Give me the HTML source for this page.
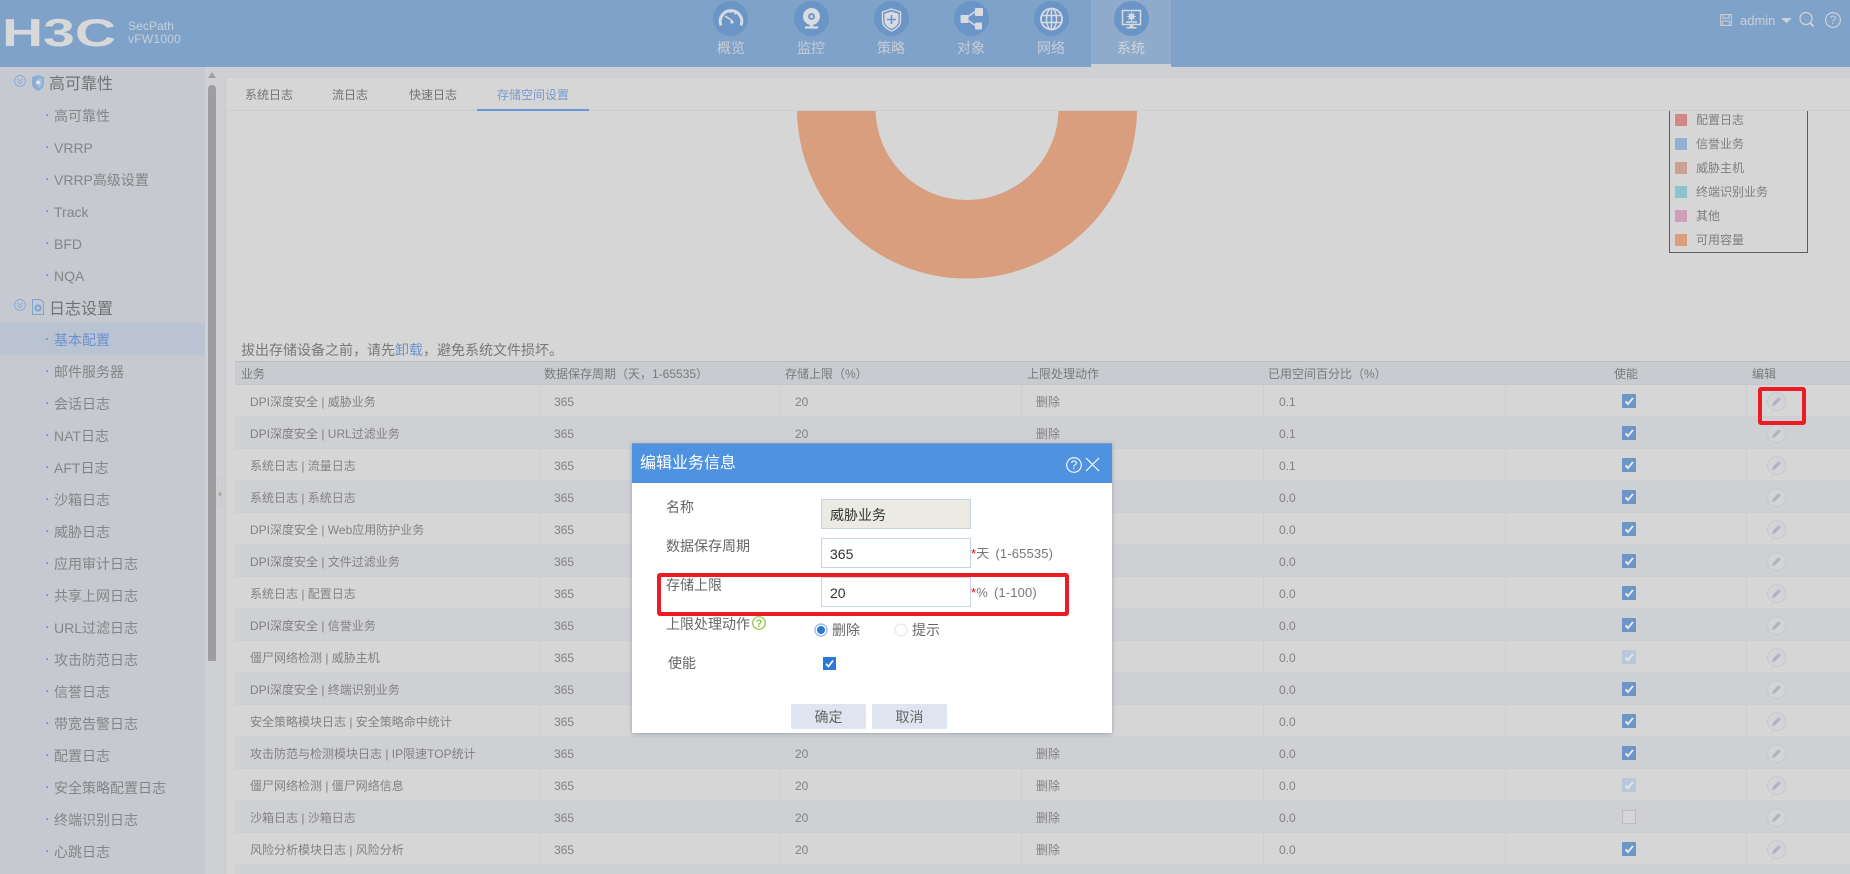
<!DOCTYPE html>
<html lang="zh-CN"><head><meta charset="utf-8"><title>H3C SecPath vFW1000</title>
<style>
*{box-sizing:border-box}
html,body{margin:0;padding:0;width:1850px;height:874px;overflow:hidden;background:#cfd0d4;font-family:"Liberation Sans","Noto Sans CJK SC",sans-serif;color:#888}
#wrap{position:relative;width:1850px;height:874px;overflow:hidden}
.a{position:absolute;white-space:nowrap}
svg{position:absolute;display:block;overflow:visible}
#hd{left:0;top:0;width:1850px;height:67px;background:#7fa2c9}
.nc{position:absolute;top:1px;width:35px;height:35px;border-radius:50%;background:#6a95c6}
.nt{position:absolute;top:38px;width:80px;text-align:center;font-size:14px;line-height:20px;color:#c6cdd7}
.s{position:absolute;left:54px;font-size:14px;line-height:20px;color:#858585}
.s:before{content:"";position:absolute;left:-8px;top:8px;width:2px;height:2px;background:#7e9dc6}
.sec{position:absolute;left:49px;font-size:16px;line-height:22px;color:#727272}
.r{position:absolute;left:235px;width:1615px;height:32px;line-height:35px;font-size:12px;color:#828282;border-bottom:1px solid #cdced1}
.r.l{background:#d6d6d6}.r.d{background:#cfd0d4}
.r i{position:absolute;top:0;width:1px;height:32px;background:#cdced1}
.r span{position:absolute;top:0;white-space:nowrap}
.c{position:absolute;left:1387px;top:9px;width:14px;height:14px;background:#6d96c8}
.c svg{left:0;top:0}
.c.dis{background:#b9c8d9}
.c.off{background:#d6d6d6;border:1px solid #bcbdc0}
.e{position:absolute;left:1532px;top:7px;width:19px;height:19px;border-radius:50%;border:1px solid #c6c8cd;background:#d3d4d7}
.e svg{left:3px;top:3px}
.th{position:absolute;top:0;line-height:24px;font-size:12px;color:#7a7a7a;white-space:nowrap}
.lg{position:absolute;left:1675px;width:12px;height:12px}
.lt{position:absolute;left:1696px;font-size:12px;line-height:16px;color:#7e7e7e}
.lb{position:absolute;font-size:14px;line-height:20px;color:#666;white-space:nowrap}
.in{position:absolute;left:821px;width:150px;height:30px;border:1px solid #c6d3e6;background:#fff;font-size:14px;line-height:30px;padding-left:8px;color:#333}
.hint{position:absolute;left:971px;font-size:13px;line-height:18px;color:#777;white-space:nowrap;letter-spacing:.15px}
.hint b{color:#e00;font-weight:400}
.btn{position:absolute;top:704px;width:75px;height:25px;background:#dfe5f0;border-radius:2px;text-align:center;font-size:14px;line-height:26px;color:#666}
.red{position:absolute;border:4px solid #ed1c24;border-radius:3px}
</style></head><body>
<svg width="0" height="0" style="position:absolute"><defs>
<symbol id="ck" viewBox="0 0 14 14"><path d="M3.500 7.500l2.500 2.500 5-6" fill="none" stroke="#e4e6e9" stroke-width="2"/></symbol>
<symbol id="pn" viewBox="0 0 11 11"><path d="M1 10l.8-3L7.500 1.300 9.700 3.500 4 9.200z" fill="#b0b3bc"/></symbol>
</defs></svg>
<div id="wrap">

<!-- header -->
<div class="a" id="hd"></div>
<svg style="left:0;top:0" width="130" height="60"><text x="2" y="46" font-family="Liberation Sans" font-weight="700" font-size="39" fill="#d8d8d8" textLength="114" lengthAdjust="spacingAndGlyphs">H3C</text></svg>
<div class="a" style="left:128px;top:19px;font-size:12px;line-height:14px;color:#c8cfd8;letter-spacing:.1px">SecPath</div>
<div class="a" style="left:128px;top:32px;font-size:12px;line-height:14px;color:#c8cfd8;letter-spacing:.25px">vFW1000</div>

<div class="a" style="left:1091px;top:0;width:80px;height:64px;background:#8eabcb"></div>
<div class="a" style="left:1091px;top:64px;width:80px;height:3px;background:#cfd0d4"></div>

<div class="nc" style="left:713px"><svg width="35" height="35" viewBox="0 0 35 35" fill="none" stroke="#d8dbe0"><path d="M8 24.500a10.800 10.800 0 1 1 20 0" stroke-width="3"/><path d="M12 15l7 4.500M17.500 10v2M23 12l-1.500 1.500" stroke-width="1.400"/><circle cx="19" cy="21" r="1.600" fill="#d8dbe0" stroke="none"/></svg></div>
<div class="nt" style="left:691px">概览</div>
<div class="nc" style="left:794px"><svg width="35" height="35" viewBox="0 0 35 35" fill="none"><circle cx="17.500" cy="15.500" r="8.500" fill="#d8dbe0"/><circle cx="17.500" cy="15.500" r="3.400" fill="#6a95c6"/><circle cx="17.500" cy="15.500" r="1.500" fill="#d8dbe0"/><path d="M16 23h3v3h-3z" fill="#d8dbe0"/><path d="M11 26.500h13" stroke="#d8dbe0" stroke-width="2.200"/></svg></div>
<div class="nt" style="left:771px">监控</div>
<div class="nc" style="left:874px"><svg width="35" height="35" viewBox="0 0 35 35" fill="none" stroke="#d8dbe0"><path d="M17.500 8l9 3v9c0 5-4.500 8-9 10-4.500-2-9-5-9-10v-9z" stroke-width="1.400"/><path d="M17.500 10.500l7 2.300v7.200c0 3.800-3.500 6.300-7 7.900-3.500-1.600-7-4.100-7-7.900v-7.200z" fill="#d8dbe0" stroke="none"/><path d="M17.500 14v9M13 18.500h9" stroke="#6a95c6" stroke-width="1.600"/></svg></div>
<div class="nt" style="left:851px">策略</div>
<div class="nc" style="left:954px"><svg width="35" height="35" viewBox="0 0 35 35"><path d="M12 17l10-7M12 18l10 7" stroke="#d8dbe0" stroke-width="1.500"/><rect x="6.500" y="14" width="8" height="8" rx="1" fill="#d8dbe0"/><rect x="21" y="7" width="8" height="8" rx="1" fill="#d8dbe0"/><rect x="21" y="21.500" width="7" height="7" rx="1" fill="#d8dbe0"/></svg></div>
<div class="nt" style="left:931px">对象</div>
<div class="nc" style="left:1034px"><svg width="35" height="35" viewBox="0 0 35 35" fill="none" stroke="#d8dbe0" stroke-width="1.500"><circle cx="17.500" cy="18" r="10.500" stroke-width="1.800"/><ellipse cx="17.500" cy="18" rx="5" ry="10.500"/><path d="M17.500 7.500v21M7.500 14.500h20M7.500 21.500h20"/></svg></div>
<div class="nt" style="left:1011px">网络</div>
<div class="nc" style="left:1114px"><svg width="35" height="35" viewBox="0 0 35 35" fill="none"><rect x="8.500" y="9.500" width="18" height="14" stroke="#d8dbe0" stroke-width="1.500"/><circle cx="17.500" cy="15.500" r="3" fill="#d8dbe0"/><circle cx="17.500" cy="15.500" r="1" fill="#6a95c6"/><path d="M17.500 11.200v8.600M13.200 15.500h8.600M14.500 12.500l6 6M20.500 12.500l-6 6" stroke="#d8dbe0" stroke-width="1"/><path d="M12 21h11M16.500 24h2v2h-2zM12.500 26.800h10" stroke="#d8dbe0" stroke-width="1.500"/></svg></div>
<div class="nt" style="left:1091px;color:#d0d4d9">系统</div>

<svg style="left:1720px;top:14px" width="12" height="12" viewBox="0 0 12 12" fill="none" stroke="#c6cdd7" stroke-width="1.100"><path d="M.6.600h10.800v10.800H.6z"/><path d="M3 .6v3.600h6V.6M2.500 11.400V7h7v4.400"/></svg>
<div class="a" style="left:1740px;top:13px;font-size:13px;line-height:16px;color:#ccd1d8">admin</div>
<svg style="left:1781px;top:18px" width="11" height="5"><path d="M0 0h11L5.500 5z" fill="#ccd1d8"/></svg>
<svg style="left:1799px;top:12px" width="16" height="16" fill="none" stroke="#ccd1d8"><circle cx="7" cy="6.500" r="6" stroke-width="1.300"/><path d="M11.500 11l3 3.500" stroke-width="2"/></svg>
<svg style="left:1825px;top:12px" width="16" height="16" fill="none" stroke="#ccd1d8"><circle cx="8" cy="8" r="7.400" stroke-width="1.200"/><text x="8" y="12.200" text-anchor="middle" font-size="12" fill="#ccd1d8" stroke="none" font-family="Liberation Sans">?</text></svg>

<!-- sidebar -->
<div class="a" style="left:0;top:67px;width:205px;height:807px;background:#c6c9cf"></div>
<div class="a" style="left:205px;top:67px;width:20px;height:807px;background:#cfd0d4"></div>
<svg style="left:208px;top:72px" width="8" height="6"><path d="M4 0l4 6H0z" fill="#9e9e9e"/></svg>
<div class="a" style="left:208px;top:85px;width:8px;height:576px;background:#9e9e9e;border-radius:4px 4px 0 0"></div>
<div class="a" style="left:217px;top:477px;width:5px;height:30px;border:1px solid #c9cbcf"></div>
<svg style="left:218px;top:491px" width="3" height="6"><path d="M3 0v6L0 3z" fill="#a6a6a6"/></svg>

<svg style="left:14px;top:75px" width="12" height="12" fill="none" stroke="#8cacd4"><circle cx="6" cy="6" r="5.500"/><path d="M3.500 3.800L6 6l2.500-2.200M3.500 6.500L6 8.700l2.500-2.200"/></svg>
<svg style="left:32px;top:75px" width="12" height="16" viewBox="0 0 12 16"><path d="M6 0l6 2v7c0 3.500-3 5.500-6 7-3-1.500-6-3.500-6-7V2z" fill="#8cacd4"/><path d="M6 2.500l4 1.300v5c0 2.500-2 4-4 5z" fill="#a6bfdc"/><circle cx="6" cy="7.500" r="2" fill="#e2e7ee"/></svg>
<div class="sec" style="top:74px">高可靠性</div>
<div class="s" style="top:106px">高可靠性</div>
<div class="s" style="top:138px">VRRP</div>
<div class="s" style="top:170px">VRRP高级设置</div>
<div class="s" style="top:202px">Track</div>
<div class="s" style="top:234px">BFD</div>
<div class="s" style="top:266px">NQA</div>

<svg style="left:14px;top:299px" width="12" height="12" fill="none" stroke="#8cacd4"><circle cx="6" cy="6" r="5.500"/><path d="M3.500 3.800L6 6l2.500-2.200M3.500 6.500L6 8.700l2.500-2.200"/></svg>
<svg style="left:32px;top:299px" width="12" height="16" viewBox="0 0 12 16" fill="none" stroke="#7ca2d0"><path d="M.5.500h8l3 3v12H.500z"/><circle cx="6" cy="9" r="2.600" stroke-width="2"/></svg>
<div class="sec" style="top:299px">日志设置</div>
<div class="a" style="left:0;top:323px;width:205px;height:32px;background:#b9c3d1"></div>
<div class="s" style="top:330px;color:#6f92ce">基本配置</div>
<div class="s" style="top:362px">邮件服务器</div>
<div class="s" style="top:394px">会话日志</div>
<div class="s" style="top:426px">NAT日志</div>
<div class="s" style="top:458px">AFT日志</div>
<div class="s" style="top:490px">沙箱日志</div>
<div class="s" style="top:522px">威胁日志</div>
<div class="s" style="top:554px">应用审计日志</div>
<div class="s" style="top:586px">共享上网日志</div>
<div class="s" style="top:618px">URL过滤日志</div>
<div class="s" style="top:650px">攻击防范日志</div>
<div class="s" style="top:682px">信誉日志</div>
<div class="s" style="top:714px">带宽告警日志</div>
<div class="s" style="top:746px">配置日志</div>
<div class="s" style="top:778px">安全策略配置日志</div>
<div class="s" style="top:810px">终端识别日志</div>
<div class="s" style="top:842px">心跳日志</div>

<!-- content panel -->
<div class="a" style="left:225px;top:77px;width:1625px;height:797px;background:#d6d6d6;border-left:1px solid #c6c7ca;border-top:1px solid #cccdd0"></div>
<div class="a" style="left:225px;top:110px;width:1625px;height:1px;background:#cdced1"></div>
<div class="a" style="left:245px;top:85px;font-size:12px;line-height:20px;color:#737373">系统日志</div>
<div class="a" style="left:332px;top:85px;font-size:12px;line-height:20px;color:#737373">流日志</div>
<div class="a" style="left:409px;top:85px;font-size:12px;line-height:20px;color:#737373">快速日志</div>
<div class="a" style="left:497px;top:85px;font-size:12px;line-height:20px;color:#769bcd">存储空间设置</div>
<div class="a" style="left:477px;top:109px;width:112px;height:2px;background:#6696d4"></div>

<!-- donut -->
<div class="a" style="left:700px;top:111px;width:600px;height:200px;overflow:hidden">
<svg style="left:0;top:0" width="600" height="200"><circle cx="267" cy="-2.500" r="130.750" fill="none" stroke="#d99e7e" stroke-width="78.500"/></svg></div>

<!-- legend -->
<div class="a" style="left:1669px;top:111px;width:139px;height:142px;border:1px solid #5c5c5c;border-top:0"></div>
<div class="lg" style="top:114px;background:#d18987"></div><div class="lt" style="top:112px">配置日志</div>
<div class="lg" style="top:138px;background:#90b1d2"></div><div class="lt" style="top:136px">信誉业务</div>
<div class="lg" style="top:162px;background:#cda192"></div><div class="lt" style="top:160px">威胁主机</div>
<div class="lg" style="top:186px;background:#8dc4cb"></div><div class="lt" style="top:184px">终端识别业务</div>
<div class="lg" style="top:210px;background:#d09eb9"></div><div class="lt" style="top:208px">其他</div>
<div class="lg" style="top:234px;background:#dc9f7e"></div><div class="lt" style="top:232px">可用容量</div>

<div class="a" style="left:241px;top:340px;font-size:14px;line-height:20px;color:#787878">拔出存储设备之前，请先<span style="color:#6b93cc">卸载</span>，避免系统文件损坏。</div>

<!-- table head -->
<div class="a" style="left:235px;top:361px;width:1615px;height:24px;background:#c8cbcf;border-top:1px solid #bcbdc0;border-bottom:1px solid #c2c6cf">
<span class="th" style="left:6px">业务</span><span class="th" style="left:309px">数据保存周期（天，1-65535）</span><span class="th" style="left:550px">存储上限（%）</span><span class="th" style="left:792px">上限处理动作</span><span class="th" style="left:1033px">已用空间百分比（%）</span><span class="th" style="left:1379px">使能</span><span class="th" style="left:1517px">编辑</span></div>

<!-- rows -->
<div class="r l" style="top:385px"><i style="left:304px"></i><i style="left:544px"></i><i style="left:786px"></i><i style="left:1028px"></i><i style="left:1270px"></i><i style="left:1511px"></i><span style="left:15px">DPI深度安全 | 威胁业务</span><span style="left:319px">365</span><span style="left:560px">20</span><span style="left:801px">删除</span><span style="left:1044px">0.1</span><div class="c"><svg width="14" height="14"><use href="#ck"/></svg></div><div class="e"><svg width="11" height="11"><use href="#pn"/></svg></div></div>
<div class="r d" style="top:417px"><i style="left:304px"></i><i style="left:544px"></i><i style="left:786px"></i><i style="left:1028px"></i><i style="left:1270px"></i><i style="left:1511px"></i><span style="left:15px">DPI深度安全 | URL过滤业务</span><span style="left:319px">365</span><span style="left:560px">20</span><span style="left:801px">删除</span><span style="left:1044px">0.1</span><div class="c"><svg width="14" height="14"><use href="#ck"/></svg></div><div class="e"><svg width="11" height="11"><use href="#pn"/></svg></div></div>
<div class="r l" style="top:449px"><i style="left:304px"></i><i style="left:544px"></i><i style="left:786px"></i><i style="left:1028px"></i><i style="left:1270px"></i><i style="left:1511px"></i><span style="left:15px">系统日志 | 流量日志</span><span style="left:319px">365</span><span style="left:560px">20</span><span style="left:801px">删除</span><span style="left:1044px">0.1</span><div class="c"><svg width="14" height="14"><use href="#ck"/></svg></div><div class="e"><svg width="11" height="11"><use href="#pn"/></svg></div></div>
<div class="r d" style="top:481px"><i style="left:304px"></i><i style="left:544px"></i><i style="left:786px"></i><i style="left:1028px"></i><i style="left:1270px"></i><i style="left:1511px"></i><span style="left:15px">系统日志 | 系统日志</span><span style="left:319px">365</span><span style="left:560px">20</span><span style="left:801px">删除</span><span style="left:1044px">0.0</span><div class="c"><svg width="14" height="14"><use href="#ck"/></svg></div><div class="e"><svg width="11" height="11"><use href="#pn"/></svg></div></div>
<div class="r l" style="top:513px"><i style="left:304px"></i><i style="left:544px"></i><i style="left:786px"></i><i style="left:1028px"></i><i style="left:1270px"></i><i style="left:1511px"></i><span style="left:15px">DPI深度安全 | Web应用防护业务</span><span style="left:319px">365</span><span style="left:560px">20</span><span style="left:801px">删除</span><span style="left:1044px">0.0</span><div class="c"><svg width="14" height="14"><use href="#ck"/></svg></div><div class="e"><svg width="11" height="11"><use href="#pn"/></svg></div></div>
<div class="r d" style="top:545px"><i style="left:304px"></i><i style="left:544px"></i><i style="left:786px"></i><i style="left:1028px"></i><i style="left:1270px"></i><i style="left:1511px"></i><span style="left:15px">DPI深度安全 | 文件过滤业务</span><span style="left:319px">365</span><span style="left:560px">20</span><span style="left:801px">删除</span><span style="left:1044px">0.0</span><div class="c"><svg width="14" height="14"><use href="#ck"/></svg></div><div class="e"><svg width="11" height="11"><use href="#pn"/></svg></div></div>
<div class="r l" style="top:577px"><i style="left:304px"></i><i style="left:544px"></i><i style="left:786px"></i><i style="left:1028px"></i><i style="left:1270px"></i><i style="left:1511px"></i><span style="left:15px">系统日志 | 配置日志</span><span style="left:319px">365</span><span style="left:560px">20</span><span style="left:801px">删除</span><span style="left:1044px">0.0</span><div class="c"><svg width="14" height="14"><use href="#ck"/></svg></div><div class="e"><svg width="11" height="11"><use href="#pn"/></svg></div></div>
<div class="r d" style="top:609px"><i style="left:304px"></i><i style="left:544px"></i><i style="left:786px"></i><i style="left:1028px"></i><i style="left:1270px"></i><i style="left:1511px"></i><span style="left:15px">DPI深度安全 | 信誉业务</span><span style="left:319px">365</span><span style="left:560px">20</span><span style="left:801px">删除</span><span style="left:1044px">0.0</span><div class="c"><svg width="14" height="14"><use href="#ck"/></svg></div><div class="e"><svg width="11" height="11"><use href="#pn"/></svg></div></div>
<div class="r l" style="top:641px"><i style="left:304px"></i><i style="left:544px"></i><i style="left:786px"></i><i style="left:1028px"></i><i style="left:1270px"></i><i style="left:1511px"></i><span style="left:15px">僵尸网络检测 | 威胁主机</span><span style="left:319px">365</span><span style="left:560px">20</span><span style="left:801px">删除</span><span style="left:1044px">0.0</span><div class="c dis"><svg width="14" height="14"><use href="#ck"/></svg></div><div class="e"><svg width="11" height="11"><use href="#pn"/></svg></div></div>
<div class="r d" style="top:673px"><i style="left:304px"></i><i style="left:544px"></i><i style="left:786px"></i><i style="left:1028px"></i><i style="left:1270px"></i><i style="left:1511px"></i><span style="left:15px">DPI深度安全 | 终端识别业务</span><span style="left:319px">365</span><span style="left:560px">20</span><span style="left:801px">删除</span><span style="left:1044px">0.0</span><div class="c"><svg width="14" height="14"><use href="#ck"/></svg></div><div class="e"><svg width="11" height="11"><use href="#pn"/></svg></div></div>
<div class="r l" style="top:705px"><i style="left:304px"></i><i style="left:544px"></i><i style="left:786px"></i><i style="left:1028px"></i><i style="left:1270px"></i><i style="left:1511px"></i><span style="left:15px">安全策略模块日志 | 安全策略命中统计</span><span style="left:319px">365</span><span style="left:560px">20</span><span style="left:801px">删除</span><span style="left:1044px">0.0</span><div class="c"><svg width="14" height="14"><use href="#ck"/></svg></div><div class="e"><svg width="11" height="11"><use href="#pn"/></svg></div></div>
<div class="r d" style="top:737px"><i style="left:304px"></i><i style="left:544px"></i><i style="left:786px"></i><i style="left:1028px"></i><i style="left:1270px"></i><i style="left:1511px"></i><span style="left:15px">攻击防范与检测模块日志 | IP限速TOP统计</span><span style="left:319px">365</span><span style="left:560px">20</span><span style="left:801px">删除</span><span style="left:1044px">0.0</span><div class="c"><svg width="14" height="14"><use href="#ck"/></svg></div><div class="e"><svg width="11" height="11"><use href="#pn"/></svg></div></div>
<div class="r l" style="top:769px"><i style="left:304px"></i><i style="left:544px"></i><i style="left:786px"></i><i style="left:1028px"></i><i style="left:1270px"></i><i style="left:1511px"></i><span style="left:15px">僵尸网络检测 | 僵尸网络信息</span><span style="left:319px">365</span><span style="left:560px">20</span><span style="left:801px">删除</span><span style="left:1044px">0.0</span><div class="c dis"><svg width="14" height="14"><use href="#ck"/></svg></div><div class="e"><svg width="11" height="11"><use href="#pn"/></svg></div></div>
<div class="r d" style="top:801px"><i style="left:304px"></i><i style="left:544px"></i><i style="left:786px"></i><i style="left:1028px"></i><i style="left:1270px"></i><i style="left:1511px"></i><span style="left:15px">沙箱日志 | 沙箱日志</span><span style="left:319px">365</span><span style="left:560px">20</span><span style="left:801px">删除</span><span style="left:1044px">0.0</span><div class="c off"></div><div class="e"><svg width="11" height="11"><use href="#pn"/></svg></div></div>
<div class="r l" style="top:833px"><i style="left:304px"></i><i style="left:544px"></i><i style="left:786px"></i><i style="left:1028px"></i><i style="left:1270px"></i><i style="left:1511px"></i><span style="left:15px">风险分析模块日志 | 风险分析</span><span style="left:319px">365</span><span style="left:560px">20</span><span style="left:801px">删除</span><span style="left:1044px">0.0</span><div class="c"><svg width="14" height="14"><use href="#ck"/></svg></div><div class="e"><svg width="11" height="11"><use href="#pn"/></svg></div></div>
<div class="r d" style="top:865px;height:9px;overflow:hidden;border:0"><i style="left:304px"></i><i style="left:544px"></i><i style="left:786px"></i><i style="left:1028px"></i><i style="left:1270px"></i><i style="left:1511px"></i></div>

<!-- red highlight on edit -->
<div class="red" style="left:1758px;top:387px;width:48px;height:38px"></div>

<!-- dialog -->
<div class="a" style="left:632px;top:443px;width:480px;height:290px;background:#fff;box-shadow:0 1px 4px rgba(110,125,150,.6)"></div>
<div class="a" style="left:632px;top:443px;width:480px;height:40px;background:#4f92e0;border-top:1px solid #7f9cc4"></div>
<div class="a" style="left:640px;top:453px;font-size:16px;line-height:22px;color:#fff">编辑业务信息</div>
<svg style="left:1066px;top:457px" width="16" height="16" fill="none" stroke="#fff"><circle cx="8" cy="8" r="7.300" stroke-width="1.100"/><text x="8" y="12.200" text-anchor="middle" font-size="12" fill="#fff" stroke="none" font-family="Liberation Sans">?</text></svg>
<svg style="left:1086px;top:458px" width="13" height="13" fill="none" stroke="#fff" stroke-width="1.200"><path d="M0 0l13 13M13 0L0 13"/></svg>

<div class="lb" style="left:666px;top:497px">名称</div>
<div class="in" style="top:499px;background:#ebebe4">威胁业务</div>
<div class="lb" style="left:666px;top:536px">数据保存周期</div>
<div class="in" style="top:538px">365</div>
<div class="hint" style="top:545px"><b>*</b>天<span style="margin-left:6px">(1-65535)</span></div>
<div class="lb" style="left:666px;top:575px">存储上限</div>
<div class="in" style="top:577px">20</div>
<div class="hint" style="top:584px"><b>*</b>%<span style="margin-left:6px">(1-100)</span></div>
<div class="lb" style="left:666px;top:614px">上限处理动作</div>
<svg style="left:752px;top:616px" width="14" height="14" fill="none" stroke="#8cc63f"><circle cx="7" cy="7" r="6.300" stroke-width="1.200"/><text x="7" y="11" text-anchor="middle" font-size="11" font-weight="700" fill="#8cc63f" stroke="none" font-family="Liberation Sans">?</text></svg>
<svg style="left:814px;top:623px" width="14" height="14"><circle cx="7" cy="7" r="6" fill="#fff" stroke="#8db4e6" stroke-width="1.200"/><circle cx="7" cy="7" r="4" fill="#2a78d8"/></svg>
<div class="lb" style="left:832px;top:620px">删除</div>
<svg style="left:894px;top:623px" width="14" height="14"><circle cx="7" cy="7" r="6" fill="#fff" stroke="#e4e4e4" stroke-width="1"/></svg>
<div class="lb" style="left:912px;top:620px">提示</div>
<div class="lb" style="left:668px;top:653px">使能</div>
<div class="a" style="left:823px;top:657px;width:13px;height:13px;background:#2a78d8"><svg width="13" height="13"><path d="M3 6.800l2.500 2.700 4.500-6" fill="none" stroke="#fff" stroke-width="1.700"/></svg></div>
<div class="btn" style="left:791px">确定</div>
<div class="btn" style="left:872px">取消</div>

<!-- red highlight in dialog -->
<div class="red" style="left:657px;top:573px;width:412px;height:43px"></div>

</div>
</body></html>
